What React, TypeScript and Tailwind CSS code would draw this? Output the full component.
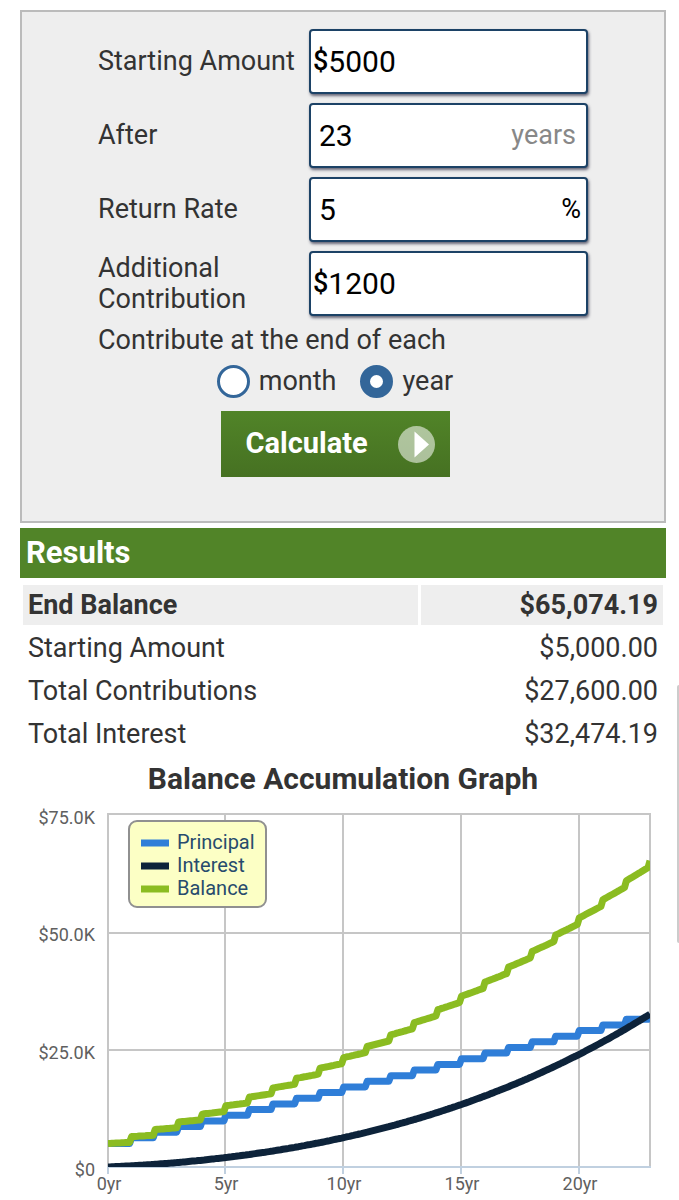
import React, { useId, useState } from 'react';

interface AmountFieldProps {
  label: string;
  value: string;
  onChange: (value: string) => void;
  prefix?: string;
  suffix?: string;
  muted?: boolean;
}

const AmountField: React.FC<AmountFieldProps> = ({ label, value, onChange, prefix, suffix, muted }) => {
  const id = useId();

  return (
    <div className="grid grid-cols-[211px_1fr] items-center">
      <label htmlFor={id} className="leading-[31px]">{label}</label>
      <div
        className={`flex h-[65px] items-center rounded-[4px] border-2 border-[#1c4266] bg-white text-black shadow-[1px_2px_3px_#667] ${
          prefix ? 'pl-[2px]' : 'pl-2'
        }`}
      >
        {prefix && <span className="font-medium">{prefix}</span>}
        <input
          id={id}
          type="text"
          inputMode="decimal"
          value={value}
          onChange={(e) => onChange(e.target.value)}
          className="h-full w-0 flex-1 bg-transparent text-[30px] outline-none"
        />
        {suffix && <span className={muted ? 'pr-[10px] text-[#888]' : 'pr-[5px]'}>{suffix}</span>}
      </div>
    </div>
  );
};

// Plot area inside the 646 x 399 chart
const LEFT = 88;
const RIGHT = 630;
const TOP = 13;
const BOTTOM = 366;
const YEARS = 23;

const START = 5000;
const CONTRIBUTION = 1200;
const RATE = 0.05;

// One point per month, contributions land at the end of each year
const buildSeries = () => {
  const principal: number[] = [];
  const interest: number[] = [];
  const balance: number[] = [];
  let yearStart = START;

  for (let m = 0; m <= YEARS * 12; m++) {
    const month = m % 12;
    if (m > 0 && month === 0) {
      yearStart = yearStart * (1 + RATE) + CONTRIBUTION;
    }
    const total = yearStart * Math.pow(1 + RATE, month / 12);
    const paid = START + CONTRIBUTION * Math.floor(m / 12);
    principal.push(paid);
    balance.push(total);
    interest.push(total - paid);
  }
  return { principal, interest, balance };
};

const toPoints = (values: number[]) =>
  values
    .map((v, i) => {
      const x = LEFT + (i / (YEARS * 12)) * (RIGHT - LEFT);
      const y = BOTTOM - (v / 75000) * (BOTTOM - TOP);
      return `${x.toFixed(1)},${y.toFixed(1)}`;
    })
    .join(' ');

const yAxis = [
  { label: '$75.0K', line: 13, text: 23 },
  { label: '$50.0K', line: 132, text: 140 },
  { label: '$25.0K', line: 249, text: 258 },
  { label: '$0', line: 366, text: 375 },
];

const xAxis = [0, 5, 10, 15, 20];

const legend = [
  { label: 'Principal', color: '#2f7ed8' },
  { label: 'Interest', color: '#0d233a' },
  { label: 'Balance', color: '#8bbc21' },
];

const BalanceChart: React.FC = () => {
  const series = buildSeries();

  return (
    <svg viewBox="0 0 646 399" className="block w-full" role="img" aria-label="Balance Accumulation Graph">
      <defs>
        <clipPath id="plot">
          <rect x={LEFT} y={TOP} width={RIGHT - LEFT} height={BOTTOM - TOP} />
        </clipPath>
      </defs>

      {/* Grid */}
      <g stroke="#c6c6c6" strokeWidth="2">
        {yAxis.slice(0, 3).map((tick) => (
          <line key={tick.label} x1={LEFT - 1} x2={RIGHT + 1} y1={tick.line} y2={tick.line} />
        ))}
        {xAxis.map((year) => {
          const x = Math.floor(LEFT + (year / YEARS) * (RIGHT - LEFT));
          return <line key={year} x1={x} x2={x} y1={TOP} y2={BOTTOM} />;
        })}
        <line x1={RIGHT} x2={RIGHT} y1={TOP} y2={BOTTOM} />
      </g>
      <g stroke="#c0d0e0" strokeWidth="2">
        <line x1={LEFT - 1} x2={RIGHT + 1} y1={BOTTOM} y2={BOTTOM} />
        {xAxis.map((year) => {
          const x = Math.floor(LEFT + (year / YEARS) * (RIGHT - LEFT));
          return <line key={year} x1={x} x2={x} y1={BOTTOM} y2={BOTTOM + 7} />;
        })}
      </g>

      {/* Series */}
      <g clipPath="url(#plot)" fill="none" strokeWidth="7" strokeLinejoin="round">
        <polyline points={toPoints(series.principal)} stroke="#2f7ed8" />
        <polyline points={toPoints(series.interest)} stroke="#0d233a" />
        <polyline points={toPoints(series.balance)} stroke="#8bbc21" />
      </g>

      {/* Axis labels */}
      <g fill="#606060" fontSize="18">
        {yAxis.map((tick) => (
          <text key={tick.label} x="75" y={tick.text} textAnchor="end">{tick.label}</text>
        ))}
        {xAxis.map((year) => (
          <text key={year} x={Math.floor(LEFT + (year / YEARS) * (RIGHT - LEFT)) + 1} y="389" textAnchor="middle">
            {`${year}yr`}
          </text>
        ))}
      </g>

      {/* Legend */}
      <rect x="109" y="20" width="137" height="86" rx="8" fill="#fcffc5" stroke="#909090" strokeWidth="2" />
      {legend.map((item, i) => (
        <g key={item.label}>
          <line x1="121" x2="149" y1={42 + i * 23} y2={42 + i * 23} stroke={item.color} strokeWidth="7" />
          <text x="157" y={48 + i * 23} fontSize="20" fill="#274b6d">{item.label}</text>
        </g>
      ))}
    </svg>
  );
};

const results = [
  { label: 'Starting Amount', value: '$5,000.00' },
  { label: 'Total Contributions', value: '$27,600.00' },
  { label: 'Total Interest', value: '$32,474.19' },
];

const App: React.FC = () => {
  const [amount, setAmount] = useState('5000');
  const [years, setYears] = useState('23');
  const [rate, setRate] = useState('5');
  const [contribution, setContribution] = useState('1200');
  const [period, setPeriod] = useState('year');

  return (
    <main className="relative bg-white pt-[10px] pr-[13px] pl-5 font-[Roboto,sans-serif] text-[27px] text-[#333]">
      <form
        onSubmit={(e) => e.preventDefault()}
        className="border-2 border-[#bbb] bg-[#eee] pt-[17px] pb-[44px]"
      >
        <div className="mx-auto flex max-w-[490px] flex-col gap-[9px]">
          <AmountField label="Starting Amount" value={amount} onChange={setAmount} prefix="$" />
          <AmountField label="After" value={years} onChange={setYears} suffix="years" muted />
          <AmountField label="Return Rate" value={rate} onChange={setRate} suffix="%" />
          <AmountField label="Additional Contribution" value={contribution} onChange={setContribution} prefix="$" />

          <fieldset>
            <legend className="leading-[31px]">Contribute at the end of each</legend>
            <div className="mt-2 flex justify-center gap-6 pr-4 leading-[34px]">
              {['month', 'year'].map((option) => (
                <label key={option} className="flex items-center gap-[9px]">
                  <input
                    type="radio"
                    name="period"
                    value={option}
                    checked={period === option}
                    onChange={() => setPeriod(option)}
                    className="size-[33px] appearance-none rounded-full border-3 border-[#369] bg-white checked:border-[10px]"
                  />
                  {option}
                </label>
              ))}
            </div>
          </fieldset>
        </div>

        <div className="mt-[13px] flex justify-center pr-4">
          <button
            type="submit"
            className="flex h-[66px] w-[229px] items-center justify-between bg-linear-to-b from-[#518428] to-[#467122] pr-[15px] pl-[25px] text-[29px] font-bold text-white"
          >
            Calculate
            <svg viewBox="0 0 37 37" className="size-[37px]" aria-hidden="true">
              <circle cx="18.5" cy="18.5" r="18.5" fill="#fff" fillOpacity="0.55" />
              <path d="M16.5 5.5 L31 18.5 L16.5 31.5 Z" fill="#fff" />
            </svg>
          </button>
        </div>
      </form>

      <h2 className="mt-[5px] bg-[#518428] px-[6px] text-[31px] leading-[50px] font-bold text-white">Results</h2>

      <table className="mt-1 w-full border-separate border-spacing-[3px]">
        <tbody className="leading-[40px]">
          <tr className="bg-[#eee] font-bold">
            <th scope="row" className="w-[62%] px-[5px] text-left">End Balance</th>
            <td className="px-[5px] text-right">$65,074.19</td>
          </tr>
          {results.map((row) => (
            <tr key={row.label}>
              <th scope="row" className="px-[5px] text-left font-normal">{row.label}</th>
              <td className="px-[5px] text-right">{row.value}</td>
            </tr>
          ))}
        </tbody>
      </table>

      <h3 className="text-center text-[30px] leading-[44px] font-bold">Balance Accumulation Graph</h3>
      <BalanceChart />

      {/* Scroll thumb at the window edge */}
      <div className="absolute top-[685px] right-0 h-[258px] w-[2px] rounded-l bg-[#ccc]" aria-hidden="true" />
    </main>
  );
};

export default App;
